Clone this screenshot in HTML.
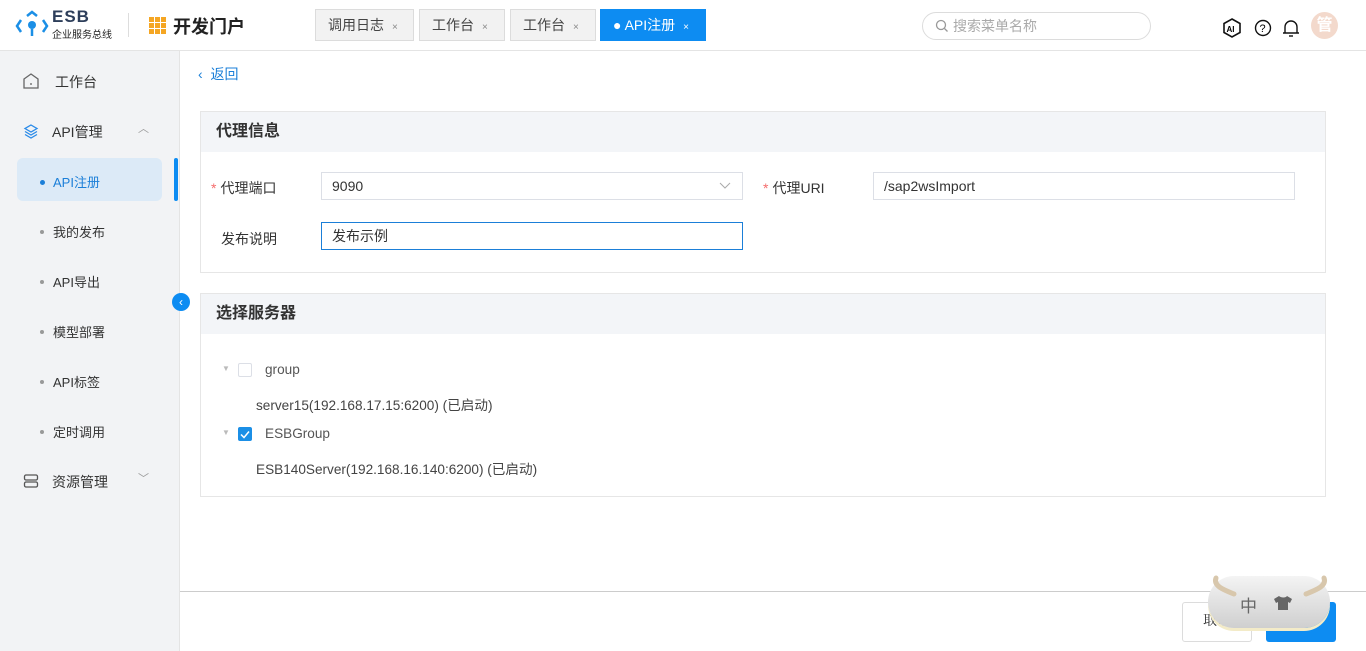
<!DOCTYPE html>
<html><head><meta charset="utf-8"><style>
*{box-sizing:border-box;margin:0;padding:0}
body{width:1366px;height:651px;overflow:hidden;font-family:"Liberation Sans","Noto Sans CJK SC",sans-serif;font-size:14px;color:#333;background:#fff;position:relative}
.abs{position:absolute}
.top{left:0;top:0;width:1366px;height:51px;border-bottom:1px solid #e4e4e4;background:#fff}
.tab{top:9px;height:32px;border:1px solid #dcdcdc;background:#f2f2f2;font-size:14px;line-height:30px;padding-left:12px;color:#444}
.tab span{font-size:10px;color:#888;margin-left:8px}
.side{left:0;top:51px;width:180px;height:600px;background:#f2f3f5;border-right:1px solid #e4e4e4}
.mi{left:0;width:180px;font-size:14px;color:#333}
.sub{left:53px;font-size:13px;color:#333}
.dot{width:4px;height:4px;border-radius:50%;background:#999;position:absolute;left:-13px;top:8px}
.card{left:200px;width:1126px;border:1px solid #e6e6e6;background:#fff}
.card .h{height:40px;background:#f3f5f8;font-size:16px;font-weight:bold;padding-left:15px;line-height:40px;color:#333}
.inp{height:28px;border:1px solid #dcdfe6;font-size:14px;line-height:26px;padding-left:10px;background:#fff}
.lbl{font-size:14px;color:#333}
.star{color:#f56c6c;margin-right:4px}
.tr{font-size:13.6px}
</style></head><body>
<div class="abs top"></div>
<svg class="abs" style="left:15px;top:10px" width="34" height="30" viewBox="0 0 34 30"><path d="M12 6l5-4 5 4" stroke="#1b8fe6" stroke-width="2.5" fill="none"/><circle cx="17" cy="15" r="4" fill="#1b8fe6"/><path d="M6 10L2 16l4 6M28 10l4 6-4 6M17 19v7" stroke="#1b8fe6" stroke-width="2.5" fill="none"/></svg>
<div class="abs" style="left:52px;top:7px;font-size:17px;font-weight:bold;color:#2d3e5a;letter-spacing:1px">ESB</div>
<div class="abs" style="left:52px;top:26px;font-size:10px;color:#222">企业服务总线</div>
<div class="abs" style="left:128px;top:13px;width:1px;height:24px;background:#ddd"></div>
<svg class="abs" style="left:149px;top:17px" width="18" height="18"><g fill="#f5a623"><rect x="0" y="0" width="5" height="5"/><rect x="6" y="0" width="5" height="5"/><rect x="12" y="0" width="5" height="5"/><rect x="0" y="6" width="5" height="5"/><rect x="6" y="6" width="5" height="5"/><rect x="12" y="6" width="5" height="5"/><rect x="0" y="12" width="5" height="5"/><rect x="6" y="12" width="5" height="5"/><rect x="12" y="12" width="5" height="5"/></g></svg>
<div class="abs" style="left:173px;top:13px;font-size:18px;font-weight:bold;color:#222">开发门户</div>
<div class="abs tab" style="left:315px;width:99px">调用日志<span>×</span></div>
<div class="abs tab" style="left:419px;width:86px">工作台<span>×</span></div>
<div class="abs tab" style="left:510px;width:86px">工作台<span>×</span></div>
<div class="abs tab" style="left:600px;width:106px;background:#0d8cf2;border-color:#0d8cf2;color:#fff">● API注册<span style="color:#fff">×</span></div>
<div class="abs" style="left:922px;top:12px;width:229px;height:28px;border:1px solid #dcdcdc;border-radius:14px;font-size:14px;color:#aaa;line-height:26px;padding-left:30px">搜索菜单名称</div>
<svg class="abs" style="left:935px;top:19px" width="14" height="14"><circle cx="6" cy="6" r="4.5" stroke="#999" fill="none" stroke-width="1.3"/><path d="M9.5 9.5l3 3" stroke="#999" stroke-width="1.3"/></svg>
<svg class="abs" style="left:1222px;top:18px" width="20" height="20"><path d="M10 1l8 4.5v9L10 19l-8-4.5v-9z" stroke="#111" stroke-width="1.6" fill="none"/><text x="4.5" y="14" font-size="8" font-weight="bold" font-family="Liberation Sans">AI</text></svg>
<svg class="abs" style="left:1254px;top:19px" width="18" height="18"><circle cx="9" cy="9" r="7.5" stroke="#111" stroke-width="1.4" fill="none"/><text x="5.5" y="13" font-size="11" font-family="Liberation Sans">?</text></svg>
<svg class="abs" style="left:1282px;top:18px" width="18" height="20"><path d="M3 15V9a6 6 0 0112 0v6h2H1z" stroke="#111" stroke-width="1.4" fill="none"/><path d="M7 18h4" stroke="#111" stroke-width="1.4"/></svg>
<div class="abs" style="left:1311px;top:12px;width:27px;height:27px;border-radius:50%;background:#f3d9cc;color:#fff;font-size:16px;text-align:center;line-height:27px;font-weight:bold">管</div>

<div class="abs side"></div>
<svg class="abs" style="left:23px;top:72px" width="16" height="17"><path d="M1 7l7-5 7 5v9H1z" stroke="#666" stroke-width="1.3" fill="none"/><path d="M8 11v2" stroke="#666" stroke-width="1.3"/></svg>
<div class="abs mi" style="left:55px;top:72px">工作台</div>
<svg class="abs" style="left:23px;top:123px" width="16" height="16"><path d="M8 2l6 3.5-6 3.5-6-3.5z M2 8.5l6 3.5 6-3.5 M2 11.5l6 3.5 6-3.5" stroke="#2a8ae8" stroke-width="1.3" fill="none"/></svg>
<div class="abs mi" style="left:52px;top:122px">API管理</div>
<div class="abs" style="left:138px;top:120px;font-size:11px;color:#999">︿</div>
<div class="abs" style="left:17px;top:158px;width:145px;height:43px;background:#dceaf7;border-radius:6px"></div>
<div class="abs" style="left:174px;top:158px;width:4px;height:43px;background:#0d8cf2;border-radius:2px"></div>
<div class="abs sub" style="top:172px;color:#1b7fd8"><i class="dot" style="background:#1b7fd8;width:5px;height:5px"></i>API注册</div>
<div class="abs sub" style="top:222px"><i class="dot"></i>我的发布</div>
<div class="abs sub" style="top:272px"><i class="dot"></i>API导出</div>
<div class="abs sub" style="top:322px"><i class="dot"></i>模型部署</div>
<div class="abs sub" style="top:372px"><i class="dot"></i>API标签</div>
<div class="abs sub" style="top:422px"><i class="dot"></i>定时调用</div>
<svg class="abs" style="left:23px;top:473px" width="16" height="16"><rect x="1.5" y="2" width="13" height="5" rx="1.5" stroke="#555" stroke-width="1.3" fill="none"/><rect x="1.5" y="9" width="13" height="5" rx="1.5" stroke="#555" stroke-width="1.3" fill="none"/></svg>
<div class="abs mi" style="left:52px;top:472px">资源管理</div>
<div class="abs" style="left:138px;top:470px;font-size:11px;color:#999">﹀</div>
<div class="abs" style="left:172px;top:293px;width:18px;height:18px;border-radius:50%;background:#0d8cf2;color:#fff;font-size:12px;line-height:18px;text-align:center">‹</div>

<div class="abs" style="left:198px;top:64px;font-size:14px;color:#1b7fd8">‹ &nbsp;返回</div>

<div class="abs card" style="top:111px;height:162px"><div class="h">代理信息</div></div>
<div class="abs lbl" style="left:211px;top:178px"><span class="star">*</span>代理端口</div>
<div class="abs inp" style="left:321px;top:172px;width:422px">9090</div>
<svg class="abs" style="left:719px;top:182px" width="12" height="8"><path d="M1 1l5 5 5-5" stroke="#aaa" fill="none"/></svg>
<div class="abs lbl" style="left:763px;top:178px"><span class="star">*</span>代理URI</div>
<div class="abs inp" style="left:873px;top:172px;width:422px">/sap2wsImport</div>
<div class="abs lbl" style="left:221px;top:229px">发布说明</div>
<div class="abs inp" style="left:321px;top:222px;width:422px;border-color:#1b7fd8">发布示例</div>

<div class="abs card" style="top:293px;height:204px"><div class="h">选择服务器</div></div>
<div class="abs" style="left:222px;top:364px;font-size:8px;color:#bbb">▼</div>
<div class="abs" style="left:238px;top:363px;width:14px;height:14px;border:1px solid #dcdfe6;border-radius:2px"></div>
<div class="abs tr" style="left:265px;top:362px;color:#555">group</div>
<div class="abs tr" style="left:256px;top:394px;color:#444">server15(192.168.17.15:6200) (已启动)</div>
<div class="abs" style="left:222px;top:428px;font-size:8px;color:#bbb">▼</div>
<div class="abs" style="left:238px;top:427px;width:14px;height:14px;background:#1b8fe6;border-radius:2px"></div>
<svg class="abs" style="left:240px;top:430px" width="10" height="9"><path d="M1 4.5l3 3 5-6" stroke="#fff" stroke-width="1.5" fill="none"/></svg>
<div class="abs tr" style="left:265px;top:426px;color:#555">ESBGroup</div>
<div class="abs tr" style="left:256px;top:458px;color:#444">ESB140Server(192.168.16.140:6200) (已启动)</div>

<div class="abs" style="left:180px;top:591px;width:1186px;height:1px;background:#ccc"></div>
<div class="abs" style="left:1182px;top:602px;width:70px;height:40px;border:1px solid #dcdcdc;border-radius:3px;line-height:38px;padding-left:20px;color:#333;font-family:'Liberation Serif','Noto Serif CJK SC',serif">取消</div>
<div class="abs" style="left:1266px;top:602px;width:70px;height:40px;background:#0d8cf2;border-radius:3px"></div>
<div class="abs" style="left:1208px;top:576px;width:122px;height:52px;border-radius:26px;background:linear-gradient(#f4f4f4,#cfcfcf);box-shadow:0 3px 0 #f3ebc8"></div>
<div class="abs" style="left:1240px;top:592px;font-size:17px;color:#666">中</div>
<svg class="abs" style="left:1273px;top:595px" width="20" height="16"><path d="M6 1l-5 3 2 4 2-1v8h10V7l2 1 2-4-5-3c-1 2-6 2-8 0z" fill="#666"/></svg>
<svg class="abs" style="left:1210px;top:572px" width="120" height="28"><path d="M6 6c-3 8 8 12 18 16" stroke="#d8c7ac" stroke-width="5" fill="none" stroke-linecap="round"/><path d="M114 6c3 8-8 12-18 16" stroke="#d8c7ac" stroke-width="5" fill="none" stroke-linecap="round"/></svg>
</body></html>
